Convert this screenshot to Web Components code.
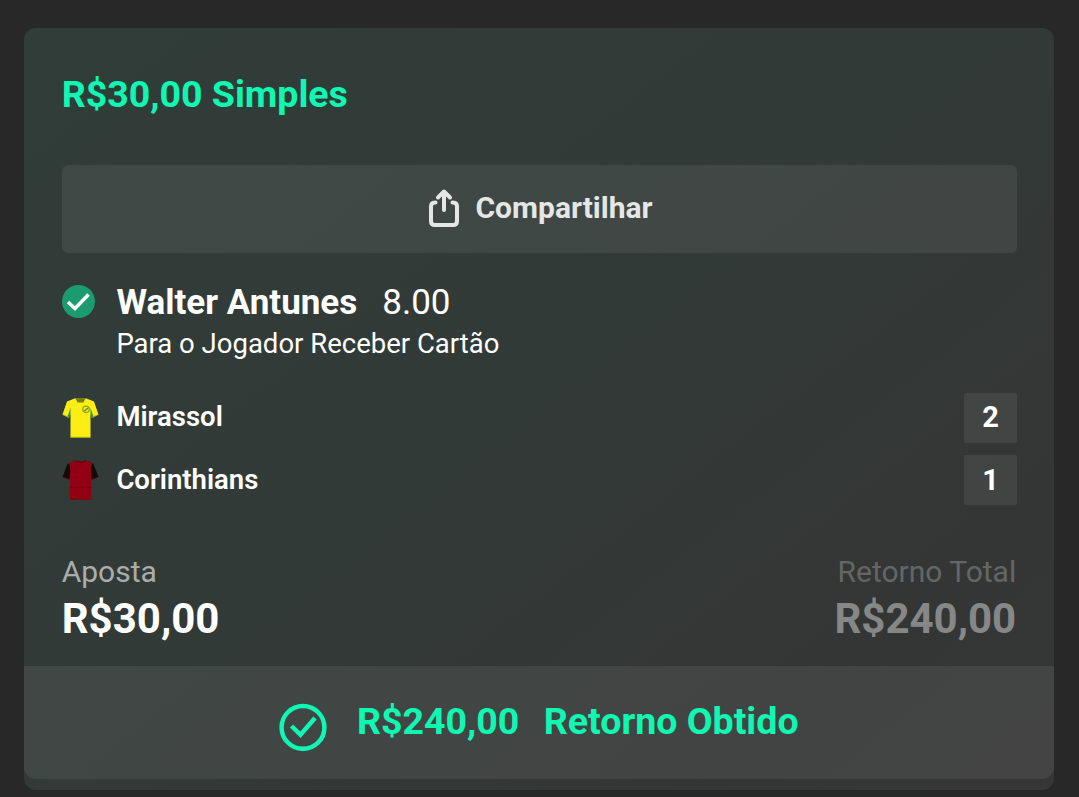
<!DOCTYPE html>
<html lang="pt-BR">
<head>
<meta charset="utf-8">
<title>Aposta</title>
<style>
html,body{margin:0;height:100%;overflow:hidden;background:#282828}
body{font-family:Roboto,sans-serif;color:#fff}
</style>
</head>
<body>
<bet-card>
  <bet-title>R$30,00 Simples</bet-title>
  <share-button>Compartilhar</share-button>
  <bet-selection odds="8.00" market="Para o Jogador Receber Cartão">Walter Antunes</bet-selection>
  <team-row kit="yellow" score="2">Mirassol</team-row>
  <team-row kit="red" score="1">Corinthians</team-row>
  <bet-totals></bet-totals>
  <bet-return slot="footer" amount="R$240,00">Retorno Obtido</bet-return>
</bet-card>
<script>
const define = (name, render) => customElements.define(name, class extends HTMLElement {
  connectedCallback() {
    if (this.shadowRoot) return;
    const t = document.createElement('template');
    t.innerHTML = render(this);
    this.attachShadow({mode: 'open'}).append(t.content.cloneNode(true));
  }
});

const kits = {
  yellow: `<svg viewBox="0 0 38 42" width="38" height="42">
    <path d="M12.500 1.500 5 4.500 .5 17.500 6.500 20.500 8.500 18V40.500H28.500V18L30.500 20.500 36.500 17.500 32 4.500 24.500 1.500Z" fill="#fcee14"/>
    <path d="M8.500 10.500V20.500H5Q7 16 8.500 10.500ZM28.500 10.500V20.500H32Q30 16 28.500 10.500Z" fill="#3f9432"/>
    <path d="M13.500 1.200H23.500L21.500 5.500H15.500Z" fill="#757d16"/>
    <path d="M.5 17.500 6.500 20.300M36.500 17.500 30.500 20.300M8.500 40.300H28.500" stroke="#a9a51b" fill="none"/>
    <circle cx="24" cy="12.300" r="3.200" fill="none" stroke="#8fa522" stroke-width="1.300"/>
    <path d="M22.300 14 26 11" stroke="#5f8f28" stroke-width="1.500"/></svg>`,
  red: `<svg viewBox="0 0 38 42" width="38" height="42">
    <path d="M12 2 5.500 5 .5 18 7 20.500 9 18V9ZM26 2 31.500 5 36.500 18 30.500 20.500 28 18V9Z" fill="#120b0c"/>
    <path d="M12.500 1.500Q18.500 3.500 24.500 1.500L30 4Q28 9 29.500 17V39Q29.500 40.500 28 40.500H9.500Q7.800 40.500 7.800 39V17Q9 9 7 4Z" fill="#930014"/>
    <path d="M12.500 1.500Q18.500 4.500 24.500 1.500" stroke="#5f0710" fill="none" stroke-width="1.300"/>
    <path d="M8 28.500H29.500M9 40.200H28.500M1 18 6.500 20.200M36 18 30.500 20.200" stroke="#74000f" stroke-width=".8"/></svg>`
};

define('bet-card', () => `<style>
  :host{display:flex;flex-direction:column;box-sizing:border-box;margin:28px 25px 0 24px;height:762px;padding-bottom:11px;border-radius:12px;overflow:hidden;background:linear-gradient(142deg,#303d38 0%,#323a37 45%,#343635 82%,#363636 100%)}
  .main{flex:1;padding:0 37px 0 38px}
  </style><div class="main"><slot></slot></div><slot name="footer"></slot>`);

define('bet-title', () => `<style>
  :host{display:block;height:137px;line-height:133px;font-size:37.500px;font-weight:700;color:#0ff8b3;margin-left:-.3px}
  </style><slot></slot>`);

define('share-button', () => `<style>
  :host{display:flex;justify-content:center;height:88px;padding-left:2px;box-sizing:border-box;border-radius:6px;background:rgba(255,255,255,.07);color:#e5e7e6;font-size:30px;font-weight:700;line-height:86px}
  svg{margin:23px 15px 0 0}
  </style><svg width="32" height="40" viewBox="0 0 32 40" fill="none" stroke="currentColor" stroke-width="4" stroke-linecap="round" stroke-linejoin="round">
  <path d="M7.500 14.500H7Q3 14.500 3 18.500V33Q3 37 7 37H25Q29 37 29 33V18.500Q29 14.500 25 14.500H24.500M16 22V4M10 9.500 16 3.500 22 9.500"/></svg><slot></slot>`);

define('bet-selection', el => `<style>
  :host{display:grid;grid-template-columns:54.400px 1fr;padding-top:28px;height:112px;box-sizing:content-box}
  svg{margin-top:4px}
  .name{font-size:35px;line-height:43px;font-weight:700;display:flex;gap:25px}
  .odds{font-weight:400}
  .market{font-size:27.500px;line-height:39px}
  </style><svg width="34" height="34" viewBox="0 0 34 34"><circle cx="16.500" cy="16.500" r="16.500" fill="#1c9b70"/><path d="M6 17 13 23.500 26.500 9.500" fill="none" stroke="#fff" stroke-width="3.400"/></svg>
  <div><div class="name"><slot></slot><span class="odds">${el.getAttribute('odds')}</span></div>
  <div class="market">${el.getAttribute('market')}</div></div>`);

define('team-row', el => `<style>
  :host{display:flex;height:50px;margin-bottom:12px;line-height:${el.getAttribute('kit') === 'red' ? 50 : 48}px;font-size:27.500px;font-weight:600}
  .kit{width:54.400px;padding-top:4px;box-sizing:border-box}
  svg{display:block}
  .name{flex:1}
  .score{width:53px;text-align:center;font-weight:700;font-size:29px;border-radius:2px;background:rgba(255,255,255,.07)}
  </style><div class="kit">${kits[el.getAttribute('kit')]}</div><div class="name"><slot></slot></div><div class="score">${el.getAttribute('score')}</div>`);

define('bet-totals', () => `<style>
  :host{display:flex;justify-content:space-between;padding-top:33px;margin:0 .8px 0 -.3px}
  .label{font-size:30px;line-height:44px;color:#abadac}
  .value{font-size:42px;line-height:50px;font-weight:700}
  .right{text-align:right}
  .right .label{color:#646665}.right .value{color:#868887}
  </style><div><div class="label">Aposta</div><div class="value">R$30,00</div></div>
  <div class="right"><div class="label">Retorno Total</div><div class="value">R$240,00</div></div>`);

define('bet-return', el => `<style>
  :host{display:flex;height:113px;box-sizing:border-box;padding-left:255px;border-radius:0 0 12px 12px;background:rgba(255,255,255,.07);color:#0ff8b3;font-size:37.500px;font-weight:700;line-height:111px}
  svg{margin:37px 30px 0 0}
  .amount{margin-right:24.500px}
  </style><svg width="48" height="48" viewBox="0 0 48 48" fill="none" stroke="currentColor"><circle cx="24" cy="24.400" r="21.400" stroke-width="4.500"/><path d="M12.500 23 21.500 31.800 36 15" stroke-width="4.500"/></svg>
  <span class="amount">${el.getAttribute('amount')}</span><slot></slot>`);
</script>
</body>
</html>
